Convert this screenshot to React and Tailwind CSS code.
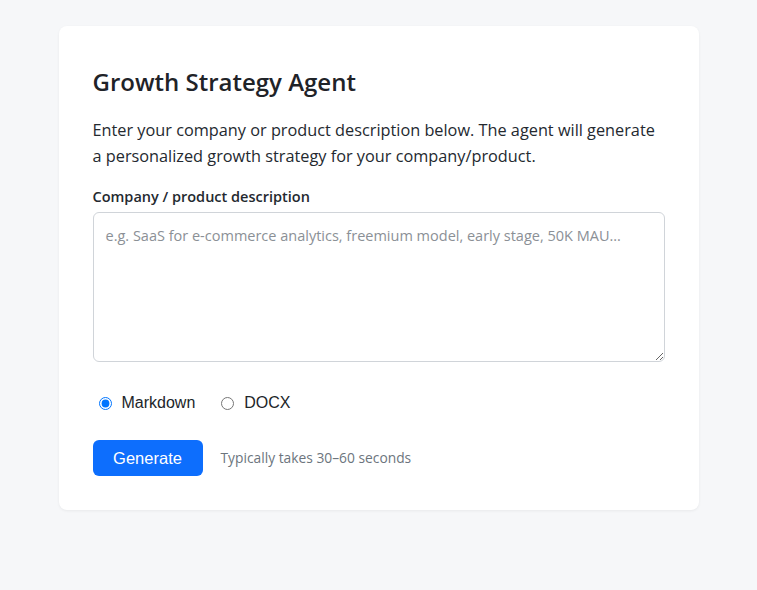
import { useState } from 'react'

export default function App() {
  const [format, setFormat] = useState('md')

  return (
    <div className="min-h-screen bg-[#f6f7f9] pt-[26px] font-['Open_Sans','Noto_Sans',sans-serif] text-[#212529]">
      <div className="mx-auto w-[640px] rounded-lg bg-white p-[34px] pt-[40px] shadow-[0_1px_3px_rgba(0,0,0,0.06)]">
        <h1 className="text-[24px] font-semibold leading-[32px] text-[#1f2328]">Growth Strategy Agent</h1>
        <p className="mt-[19px] text-[16.3px] leading-[26px] text-[#24292f]">
          Enter your company or product description below. The agent will generate a personalized growth strategy for
          your company/product.
        </p>

        <label className="mt-[17px] block text-[14.5px] font-semibold leading-[22px] text-[#24292f]">
          Company / product description
        </label>
        <textarea
          rows={6}
          placeholder="e.g. SaaS for e-commerce analytics, freemium model, early stage, 50K MAU..."
          className="mt-[4px] block h-[150px] w-full rounded-md border border-[#d0d4d9] px-[12px] py-[12px] text-[14.5px] leading-[22px] placeholder:text-[#8b9096] focus:outline-none"
        />

        {/* Output format */}
        <div className="mt-[29px] flex items-center gap-[26px] font-['Liberation_Sans',Arial,sans-serif] text-[16px]">
          <label className="flex items-center gap-[10px] pl-[6px]">
            <input
              type="radio"
              name="format"
              checked={format === 'md'}
              onChange={() => setFormat('md')}
              className="m-0 h-[13px] w-[13px] accent-[#0075ff]"
            />
            Markdown
          </label>
          <label className="flex items-center gap-[10px]">
            <input
              type="radio"
              name="format"
              checked={format === 'docx'}
              onChange={() => setFormat('docx')}
              className="m-0 h-[13px] w-[13px] accent-[#0075ff]"
            />
            DOCX
          </label>
        </div>

        <div className="mt-[25px] flex items-center gap-[18px]">
          <button className="h-[36px] w-[110px] rounded-md bg-[#0d6efd] font-['Liberation_Sans',Arial,sans-serif] text-[16.5px] text-white">
            Generate
          </button>
          <span className="text-[13.8px] text-[#6c757d]">Typically takes 30–60 seconds</span>
        </div>
      </div>
    </div>
  )
}
